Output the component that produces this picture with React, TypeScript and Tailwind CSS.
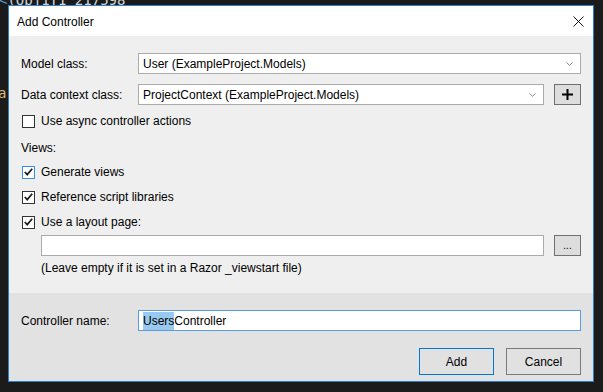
const Chevron = () => (
  <svg width="7" height="4" viewBox="0 0 7 4" className="shrink-0">
    <polyline points="0.5,0.5 3.5,3.3 6.5,0.5" fill="none" stroke="#8a8a8a" strokeWidth="1" />
  </svg>
);

const Check = ({ checked, focus }: { checked?: boolean; focus?: boolean }) => (
  <div
    className={`flex h-[13px] w-[13px] shrink-0 items-center justify-center border bg-white ${
      focus ? 'border-[#3c8ce0]' : 'border-[#333333]'
    }`}
  >
    {checked && (
      <svg width="9" height="8" viewBox="0 0 9 8">
        <polyline points="0.8,4 3.2,6.6 8.2,0.8" fill="none" stroke="#1a1a1a" strokeWidth="1.7" />
      </svg>
    )}
  </div>
);

const App = () => {
  return (
    <div className="relative h-[392px] w-[603px] overflow-hidden bg-[#1b1b1b] font-['Liberation_Sans',Arial,sans-serif] text-[12px] text-black">
      {/* code editor behind the dialog */}
      <div className="absolute left-[-1px] top-[-10px] font-['DejaVu_Sans_Mono',monospace] text-[14px] text-[#d4d4d4]">
        <span className="text-[#569cd6]">&lt;</span>(Qbj1T1 217598
      </div>
      <div className="absolute left-[-2px] top-[83px] font-['DejaVu_Sans_Mono',monospace] text-[14px] text-[#d7ba7d]">
        a:
      </div>

      <div className="relative ml-[8px] pt-[5px]">
        <div className="flex h-[377px] w-[586px] flex-col border border-[#2b7fd1]">
          {/* title bar */}
          <div className="flex h-[30px] items-center justify-between bg-white pl-[8px] pr-[9px]">
            <span className="pt-[1px] text-[12px] leading-[16px]">Add Controller</span>
            <svg width="11" height="11" viewBox="0 0 11 11">
              <path d="M0.5 0.5 L10.5 10.5 M10.5 0.5 L0.5 10.5" stroke="#111" strokeWidth="1" />
            </svg>
          </div>

          {/* body */}
          <div className="flex h-[257px] flex-col bg-[#efefef] pl-[12px] pr-[12px]">
            <div className="mt-[17px] flex h-[21px] items-center">
              <span className="w-[117px] shrink-0">Model class:</span>
              <div className="flex h-[21px] flex-1 items-center justify-between border border-[#ababab] bg-white pl-[4px] pr-[7px]">
                <span>User (ExampleProject.Models)</span>
                <Chevron />
              </div>
            </div>

            <div className="mt-[10px] flex h-[21px] items-center">
              <span className="w-[117px] shrink-0">Data context class:</span>
              <div className="flex h-[21px] flex-1 items-center justify-between border border-[#ababab] bg-white pl-[4px] pr-[7px]">
                <span>ProjectContext (ExampleProject.Models)</span>
                <Chevron />
              </div>
              <div className="ml-[10px] flex h-[21px] w-[27px] items-center justify-center border border-[#707070] bg-[#dddddd]">
                <svg width="11" height="11" viewBox="0 0 11 11">
                  <path d="M5.5 0 V11 M0 5.5 H11" stroke="#000" strokeWidth="2" />
                </svg>
              </div>
            </div>

            <div className="mt-[8px] flex h-[16px] items-center pl-[1px]">
              <Check />
              <span className="ml-[6px]">Use async controller actions</span>
            </div>

            <div className="mt-[11px] flex h-[16px] items-center">Views:</div>

            <div className="mt-[8px] flex h-[16px] items-center pl-[1px]">
              <Check checked focus />
              <span className="ml-[6px]">Generate views</span>
            </div>
            <div className="mt-[9px] flex h-[16px] items-center pl-[1px]">
              <Check checked />
              <span className="ml-[6px]">Reference script libraries</span>
            </div>
            <div className="mt-[9px] flex h-[16px] items-center pl-[1px]">
              <Check checked />
              <span className="ml-[6px]">Use a layout page:</span>
            </div>

            <div className="mt-[5px] flex h-[21px] items-center pl-[20px]">
              <div className="h-[21px] flex-1 border border-[#ababab] bg-white" />
              <div className="ml-[10px] flex h-[21px] w-[27px] items-end justify-center border border-[#707070] bg-[#dddddd] pb-[4px] text-[10px] leading-none">
                ...
              </div>
            </div>

            <div className="mt-[4px] flex h-[16px] items-center pl-[20px]">
              (Leave empty if it is set in a Razor _viewstart file)
            </div>
          </div>

          {/* footer */}
          <div className="flex h-[88px] flex-col bg-[#e2e2e2] pl-[12px] pr-[12px]">
            <div className="mt-[17px] flex h-[21px] items-center">
              <span className="w-[117px] shrink-0">Controller name:</span>
              <div className="flex h-[21px] flex-1 items-center border border-[#569de5] bg-white pl-[4px]">
                <span className="bg-[#99c9ef]">Users</span>
                <span>Controller</span>
              </div>
            </div>
            <div className="mt-[17px] flex justify-end gap-[12px]">
              <button className="h-[27px] w-[75px] border border-[#0078d7] bg-[#e1e1e1]">Add</button>
              <button className="h-[27px] w-[75px] border border-[#7a7a7a] bg-[#e1e1e1]">Cancel</button>
            </div>
          </div>
        </div>
      </div>
    </div>
  );
};

export default App;
